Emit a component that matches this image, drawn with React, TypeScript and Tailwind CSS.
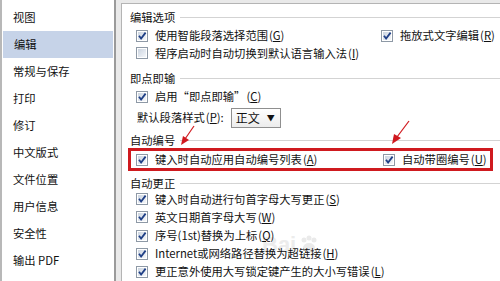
import type { ReactNode } from "react";

const navItems = [
  "视图",
  "编辑",
  "常规与保存",
  "打印",
  "修订",
  "中文版式",
  "文件位置",
  "用户信息",
  "安全性",
  "输出 PDF",
];

function Box({ checked }: { checked?: boolean }) {
  return (
    <svg width="12" height="12" viewBox="0 0 12 12" className="shrink-0">
      <defs>
        <linearGradient id="cbfill" x1="0" y1="0" x2="1" y2="1">
          <stop offset="0" stopColor="#cbd4e0" />
          <stop offset="1" stopColor="#f5f7fa" />
        </linearGradient>
      </defs>
      <rect x="0.5" y="0.5" width="11" height="11" fill="#fff" stroke="#8e99a6" />
      <rect x="2" y="2" width="8" height="8" fill="url(#cbfill)" />
      {checked ? (
        <path d="M3 5.8 L5.1 8.6 L9.6 2.6" stroke="#1f3f86" strokeWidth="1.8" fill="none" />
      ) : null}
    </svg>
  );
}

function Key({ k }: { k: string }) {
  return (
    <span className="ml-[1px]">
      (<span className="underline">{k}</span>)
    </span>
  );
}

function Check({ checked, label, k }: { checked?: boolean; label: ReactNode; k: string }) {
  return (
    <div className="flex items-center gap-[7px] whitespace-nowrap">
      <Box checked={checked} />
      <span>
        {label}
        <Key k={k} />
      </span>
    </div>
  );
}

function Section({ title, className }: { title: string; className: string }) {
  return (
    <div className={`relative flex items-center gap-[5px] pl-[8px] ${className}`}>
      <span className="whitespace-nowrap">{title}</span>
      <div className="h-px flex-1 bg-[#d3d3d3]" />
    </div>
  );
}

function Row({ children, className = "" }: { children: ReactNode; className?: string }) {
  return <div className={`relative flex items-center pl-[14px] ${className}`}>{children}</div>;
}

export default function App() {
  return (
    <div className="relative flex h-[281px] w-[500px] overflow-hidden bg-[#e9e9e9] font-['Noto_Sans_CJK_SC',sans-serif] text-[11.3px] leading-none text-[#111]">
      {/* left category list */}
      <div className="flex w-[116px] shrink-0 flex-col border-l-2 border-r-2 border-l-[#b8b8b8] border-r-[#9a9a9a] bg-white pt-[4px]">
        {navItems.map((item) => (
          <div
            key={item}
            className={`flex h-[27px] items-center pl-[11px] ${
              item === "编辑" ? "mx-[1px] bg-[#c6d3e8]" : ""
            }`}
          >
            {item}
          </div>
        ))}
      </div>

      {/* right options panel */}
      <div className="relative ml-[5px] mt-[3px] flex flex-1 flex-col border-l border-t border-[#b4b4b4] bg-white pt-[4px]">
        {/* faint watermark, painted under the rows */}
        <div className="pointer-events-none absolute left-[140px] top-[230px] flex items-center gap-[2px] font-['Liberation_Sans',sans-serif] text-[22px] font-bold text-[#ececec]">
          <span>Bai</span>
          <svg width="22" height="22" viewBox="0 0 22 22">
            <circle cx="6" cy="6" r="2.5" fill="#eaeaea" />
            <circle cx="11" cy="4" r="2.5" fill="#eaeaea" />
            <circle cx="16" cy="6" r="2.5" fill="#eaeaea" />
            <ellipse cx="11" cy="14" rx="6" ry="5" fill="#eaeaea" />
          </svg>
        </div>

        <Section title="编辑选项" className="h-[19px]" />
        <Row className="h-[18px]">
          <div className="w-[245px] shrink-0">
            <Check checked label="使用智能段落选择范围" k="G" />
          </div>
          <Check checked label="拖放式文字编辑" k="R" />
        </Row>
        <Row className="h-[18px]">
          <Check label="程序启动时自动切换到默认语言输入法" k="I" />
        </Row>

        <Section title="即点即输" className="mt-[7px] h-[19px]" />
        <Row className="h-[18px]">
          <Check checked label="启用“即点即输”" k="C" />
        </Row>
        <Row className="h-[25px] gap-[4px] !pl-[15px]">
          <span className="whitespace-nowrap">
            默认段落样式
            <Key k="P" />:
          </span>
          <div className="ml-[3px] flex h-[20px] w-[50px] items-center justify-between border border-[#8f8f8f] bg-gradient-to-b from-white to-[#ececec] pl-[4px] pr-[5px] text-[12px]">
            <span>正文</span>
            <span className="text-[8px]">▼</span>
          </div>
        </Row>

        <Section title="自动编号" className="mt-[3px] h-[15px]" />
        <div className="relative ml-[6px] mr-[7px] flex h-[24px] items-center border-[3px] border-[#cf1a1f] pl-[5px]">
          <div className="w-[247px] shrink-0">
            <Check checked label="键入时自动应用自动编号列表" k="A" />
          </div>
          <Check checked label="自动带圈编号" k="U" />
        </div>

        <Section title="自动更正" className="mt-[6px] h-[13px]" />
        <Row className="h-[18.5px]">
          <Check checked label="键入时自动进行句首字母大写更正" k="S" />
        </Row>
        <Row className="h-[18.5px]">
          <Check checked label="英文日期首字母大写" k="W" />
        </Row>
        <Row className="h-[18.5px]">
          <Check checked label="序号(1st)替换为上标" k="Q" />
        </Row>
        <Row className="h-[18.5px]">
          <Check checked label="Internet或网络路径替换为超链接" k="H" />
        </Row>
        <Row className="h-[18.5px]">
          <Check checked label="更正意外使用大写锁定键产生的大小写错误" k="L" />
        </Row>
      </div>

      {/* annotation arrows */}
      <svg className="pointer-events-none absolute left-0 top-0" width="500" height="281">
        <line x1="194" y1="126" x2="185" y2="139" stroke="#d0191f" strokeWidth="1.2" />
        <polygon points="181,145 183,136 189,140" fill="#d0191f" />
        <line x1="409" y1="121" x2="397" y2="137" stroke="#d0191f" strokeWidth="1.2" />
        <polygon points="392,144 394,134 401,138" fill="#d0191f" />
      </svg>
    </div>
  );
}
